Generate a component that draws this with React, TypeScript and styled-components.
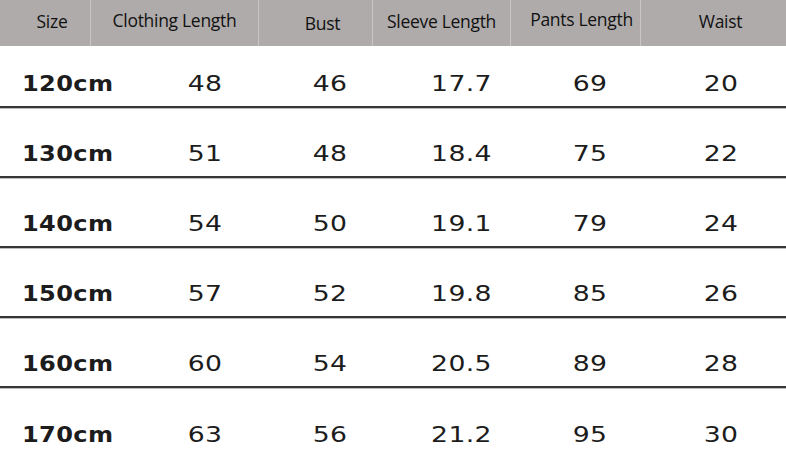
import React, { FC } from "react";
import styled, { createGlobalStyle } from "styled-components";

const GlobalStyle = createGlobalStyle`
  html, body {
    margin: 0;
    padding: 0;
    background: #fff;
    overflow: hidden;
  }
`;

interface HeadCol {
  label: string;
  width: number;
  dx: number;
  up: number;
}

// dx / up: how far the label sits off the cell centre, as in the source image
const headCols: HeadCol[] = [
  { label: "Size", width: 90, dx: 7, up: 2 },
  { label: "Clothing Length", width: 167, dx: 0, up: 3 },
  { label: "Bust", width: 113, dx: 7, up: 0 },
  { label: "Sleeve Length", width: 137, dx: 0, up: 2 },
  { label: "Pants Length", width: 129, dx: 6, up: 4 },
  { label: "Waist", width: 145, dx: 7, up: 2 },
];

const rows = [
  ["120cm", "48", "46", "17.7", "69", "20"],
  ["130cm", "51", "48", "18.4", "75", "22"],
  ["140cm", "54", "50", "19.1", "79", "24"],
  ["150cm", "57", "52", "19.8", "85", "26"],
  ["160cm", "60", "54", "20.5", "89", "28"],
  ["170cm", "63", "56", "21.2", "95", "30"],
];

const App: FC = () => (
  <Chart>
    <GlobalStyle />
    <Header>
      {headCols.map((c) => (
        <HeadCell key={c.label} $width={c.width} $dx={c.dx} $up={c.up}>
          {c.label}
        </HeadCell>
      ))}
    </Header>
    {rows.map((r, i) => (
      <Row key={r[0]} $first={i === 0} $last={i === rows.length - 1}>
        <SizeCell>
          <SizeText>{r[0]}</SizeText>
        </SizeCell>
        {r.slice(1).map((v, j) => (
          <ValueCell key={j}>
            <ValueText>{v}</ValueText>
          </ValueCell>
        ))}
      </Row>
    ))}
  </Chart>
);

const Chart = styled.div`
  width: 786px;
  height: 456px;
  overflow: hidden;
  background: #fff;
`;

const Header = styled.div`
  display: flex;
  gap: 1px;
  height: 46px;
  background: #c9c6c5;
`;

const HeadCell = styled.div<{ $width: number; $dx: number; $up: number }>`
  flex: ${(p) => (p.$width === 145 ? "1 1 auto" : `0 0 ${p.$width}px`)};
  display: flex;
  align-items: center;
  justify-content: center;
  box-sizing: border-box;
  padding-left: ${(p) => p.$dx * 2}px;
  padding-bottom: ${(p) => p.$up * 2}px;
  background: #afabaa;
  color: #111;
  font-family: "Open Sans", "Liberation Sans", sans-serif;
  font-size: 17.5px;
  letter-spacing: -0.3px;
`;

const Row = styled.div<{ $first: boolean; $last: boolean }>`
  display: grid;
  grid-template-columns: 150px 110px 140px 124px 132px 130px;
  align-items: end;
  box-sizing: border-box;
  height: ${(p) => (p.$first ? 62 : p.$last ? 68 : 70)}px;
  padding-bottom: ${(p) => (p.$last ? 8 : 9)}px;
  border-bottom: ${(p) => (p.$last ? "none" : "2px solid #363636")};
  box-shadow: ${(p) => (p.$last ? "none" : "0 1px 0 #bdbdbd")};
  color: #1c1c1c;
  font-family: "DejaVu Sans", "Noto Sans", sans-serif;
  font-size: 21.5px;
  line-height: 26px;
`;

const SizeCell = styled.div`
  padding-left: 22px;
`;

const SizeText = styled.span`
  display: inline-block;
  font-weight: 700;
  letter-spacing: 0.3px;
  transform: scaleX(1.12);
  transform-origin: left center;
`;

const ValueCell = styled.div`
  text-align: center;
`;

const ValueText = styled.span`
  display: inline-block;
  letter-spacing: 0.3px;
  transform: scaleX(1.24);
`;

export default App;
